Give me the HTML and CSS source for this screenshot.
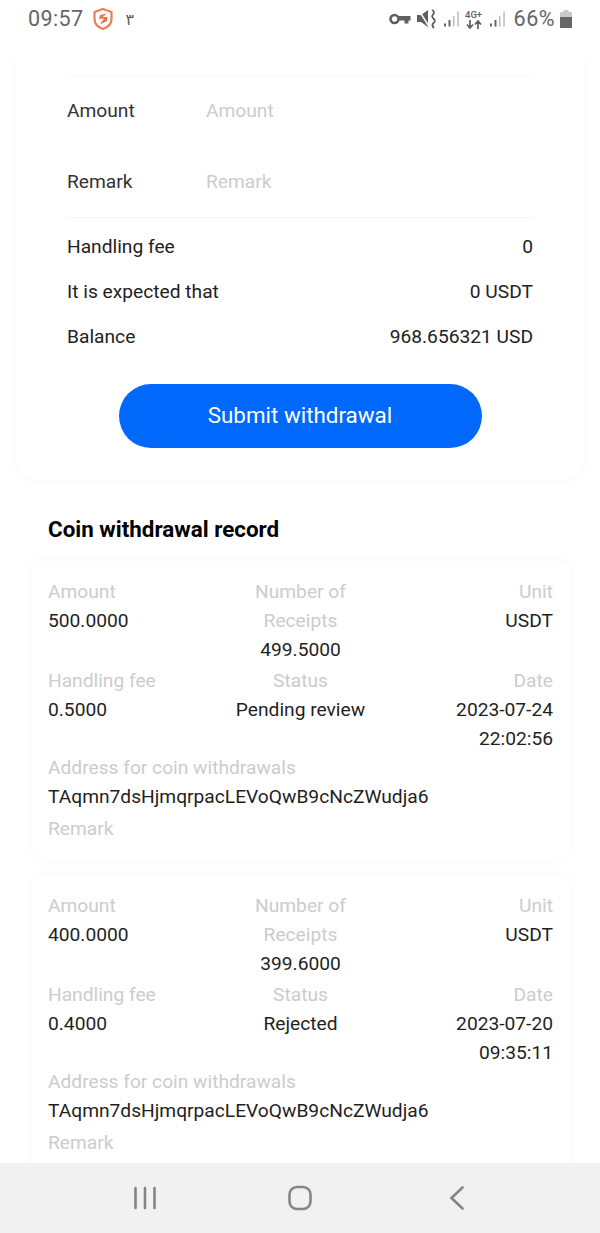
FILE: index.html
```html
<!DOCTYPE html>
<html lang="en">
<head>
<meta charset="utf-8">
<title>Withdrawal</title>
<link rel="stylesheet" href="styles.css">
</head>
<body>
<div class="screen">
  <header class="status">
    <div class="status-left">
      <span class="clock">09:57</span>
      <svg class="shield" width="22" height="24" viewBox="0 0 22 24"><path d="M11 2 L19.500 5 V12 C19.500 17 15.500 20.500 11 22 C6.500 20.500 2.500 17 2.500 12 V5 Z" fill="none" stroke="#e8805c" stroke-width="2.200"/><path d="M15 6.500 L8 8 L7 12 L12 11.500 L8 17.500 L15 14 L15.500 10 L10.500 10 Z" fill="#ee7440"/></svg>
      <span class="persian">۳</span>
    </div>
    <div class="status-right">
      <svg class="key" width="22" height="12" viewBox="0 0 22 12"><circle cx="5.500" cy="6" r="4" fill="none" stroke="#5f5f5f" stroke-width="2.600"/><path d="M9 3 H21.500 V7.500 H19.500 V10.500 H15.500 V7.500 H9 Z" fill="#5f5f5f"/></svg>
      <svg class="mute" width="20" height="20" viewBox="0 0 20 20"><path d="M0 6 H4 L11 1 V18 L4 13 H0 Z" fill="#5f5f5f"/><path d="M1 0 L13 19" stroke="#fff" stroke-width="1.500"/><path d="M15 1 Q18.500 3 16 5.500 Q14 8 17 10 Q19 12 16 14.500 Q14.500 16.500 17 19" fill="none" stroke="#5f5f5f" stroke-width="1.800"/></svg>
      <svg class="bars" width="16" height="18" viewBox="0 0 16 18"><path d="M1 13.500 h2 v3 h-2z M5.500 10 h2 v6.500 h-2z" fill="#666"/><path d="M10 6 h1.500 v10.500 h-1.500z M14.300 1.500 h1.500 v15 h-1.500z" fill="#bbb"/></svg>
      <div class="net"><span class="net-label">4G+</span><svg width="18" height="9" viewBox="0 0 18 9"><path d="M5 0 V7 M2 4.500 L5 8 L8 4.500 M13 9 V2 M10 4.500 L13 1 L16 4.500" fill="none" stroke="#5f5f5f" stroke-width="1.700"/></svg></div>
      <svg class="bars" width="16" height="18" viewBox="0 0 16 18"><path d="M1 13.500 h2 v3 h-2z M5.500 10 h2 v6.500 h-2z" fill="#666"/><path d="M10 6 h1.500 v10.500 h-1.500z M14.300 1.500 h1.500 v15 h-1.500z" fill="#bbb"/></svg>
      <span class="battery-text">66%</span>
      <svg class="battery" width="12" height="18" viewBox="0 0 12 18"><path d="M3.500 0 H8.500 V2 H12 V18 H0 V2 H3.500 Z" fill="#c9c9c9"/><rect y="7" width="12" height="11" fill="#666"/></svg>
    </div>
  </header>

  <main class="content">
    <section class="form-card">
      <div class="field-row"><span class="field-label">Amount</span><span class="placeholder">Amount</span></div>
      <div class="field-row"><span class="field-label">Remark</span><span class="placeholder">Remark</span></div>
      <div class="summary">
        <div class="summary-row"><span>Handling fee</span><span>0</span></div>
        <div class="summary-row"><span>It is expected that</span><span>0 USDT</span></div>
        <div class="summary-row"><span>Balance</span><span>968.656321 USD</span></div>
      </div>
      <button class="submit" type="button">Submit withdrawal</button>
    </section>

    <h2 class="record-title">Coin withdrawal record</h2>

    <article class="record">
      <div class="grid">
        <div class="col left"><span class="muted">Amount</span><span>500.0000</span></div>
        <div class="col mid"><span class="muted">Number of Receipts</span><span>499.5000</span></div>
        <div class="col right"><span class="muted">Unit</span><span>USDT</span></div>
        <div class="col left"><span class="muted">Handling fee</span><span>0.5000</span></div>
        <div class="col mid"><span class="muted">Status</span><span>Pending review</span></div>
        <div class="col right"><span class="muted">Date</span><span>2023-07-24 22:02:56</span></div>
      </div>
      <div class="address"><span class="muted">Address for coin withdrawals</span><span>TAqmn7dsHjmqrpacLEVoQwB9cNcZWudja6</span><span class="muted remark">Remark</span></div>
    </article>

    <article class="record">
      <div class="grid">
        <div class="col left"><span class="muted">Amount</span><span>400.0000</span></div>
        <div class="col mid"><span class="muted">Number of Receipts</span><span>399.6000</span></div>
        <div class="col right"><span class="muted">Unit</span><span>USDT</span></div>
        <div class="col left"><span class="muted">Handling fee</span><span>0.4000</span></div>
        <div class="col mid"><span class="muted">Status</span><span>Rejected</span></div>
        <div class="col right"><span class="muted">Date</span><span>2023-07-20 09:35:11</span></div>
      </div>
      <div class="address"><span class="muted">Address for coin withdrawals</span><span>TAqmn7dsHjmqrpacLEVoQwB9cNcZWudja6</span><span class="muted remark">Remark</span></div>
    </article>
  </main>

  <nav class="navbar">
    <svg width="24" height="24" viewBox="0 0 24 24"><path d="M2.500 2 V22 M12 2 V22 M21.500 2 V22" stroke="#858585" stroke-width="2.600" stroke-linecap="round" fill="none"/></svg>
    <svg class="home" width="24" height="26" viewBox="0 0 24 26"><rect x="1.500" y="2" width="21" height="22" rx="7.500" fill="none" stroke="#858585" stroke-width="2.600"/></svg>
    <svg width="16" height="24" viewBox="0 0 16 24"><path d="M13.500 1.500 L2.500 12 L13.500 22.500" stroke="#858585" stroke-width="2.600" stroke-linecap="round" fill="none"/></svg>
  </nav>
</div>
</body>
</html>
```
FILE: styles.css
```css
* { box-sizing: border-box; }
html, body { margin: 0; padding: 0; }
body { background: #fff; font-family: Roboto, "Liberation Sans", sans-serif; color: #1a1a1a; }
.screen { width: 600px; height: 1233px; display: flex; flex-direction: column; overflow: hidden; background: #fff; }

.status { flex: 0 0 58px; height: 58px; display: flex; justify-content: space-between; align-items: flex-start; padding: 7px 28px 0 28px; background: #fff; position: relative; z-index: 2; }
.status-left { display: flex; align-items: center; height: 24px; }
.clock { font-size: 21.500px; letter-spacing: 0.4px; color: #666; line-height: 24px; }
.shield { margin-left: 8px; }
.persian { font-family: "DejaVu Sans", sans-serif; font-size: 16px; color: #5f5f5f; margin-left: 12px; }
.status-right { display: flex; align-items: center; height: 24px; gap: 6px; }
.net { display: flex; flex-direction: column; align-items: center; width: 18px; }
.net-label { font-size: 9.500px; line-height: 11px; color: #5f5f5f; font-weight: 500; }
.battery-text { font-size: 21.500px; line-height: 24px; color: #666; letter-spacing: 0.5px; margin-left: 3px; }
.battery { margin-left: -1px; }

.content { flex: 1 1 0; min-height: 0; overflow: hidden; background: #fff; }

.form-card { margin: 0 16px; height: 422px; padding: 17px 51px 0; border-radius: 0 0 20px 20px; box-shadow: 0 0 16px rgba(0,0,0,0.035); background: #fff; display: flex; flex-direction: column; }
.field-row { display: flex; align-items: center; height: 70px; font-size: 19.200px; color: #333; }
.field-row:first-child { margin-bottom: 1px; border-top: 1px solid #f6f6f6; }
.field-label { width: 139px; }
.placeholder { color: #ccc; }
.summary { border-top: 1px solid #f6f6f6; margin-top: 1px; padding-top: 6px; }
.summary-row { display: flex; justify-content: space-between; align-items: center; height: 45px; font-size: 19.200px; color: #222; }
.submit { align-self: center; margin-top: 25px; width: 363px; height: 64px; padding: 0 0 2px; border: 0; border-radius: 32px; background: #0069fb; color: #fff; font: 400 22.400px Roboto, sans-serif; }

.record-title { margin: 35px 0 18px 48px; font-size: 22.400px; line-height: 28px; font-weight: 700; color: #000; }

.record { margin: 0 30px 16px 32px; padding: 17px 17px 16px 16px; height: 298px; border-radius: 14px; box-shadow: 0 0 14px rgba(0,0,0,0.035); background: #fff; font-size: 19.200px; line-height: 28.800px; color: #1f1f1f; }
.grid { display: grid; grid-template-columns: repeat(3, 1fr); row-gap: 3px; }
.col { display: flex; flex-direction: column; }
.left { text-align: left; }
.mid { text-align: center; padding: 0 12px; }
.right { text-align: right; }
.muted { color: #ccc; }
.address { display: flex; flex-direction: column; }
.remark { margin-top: 4px; }

.navbar { flex: 0 0 70px; height: 70px; background: #f1f1f1; display: flex; align-items: center; justify-content: space-between; padding: 0 135px 0 133px; position: relative; z-index: 2; }
.home { margin-right: 6px; }
```
